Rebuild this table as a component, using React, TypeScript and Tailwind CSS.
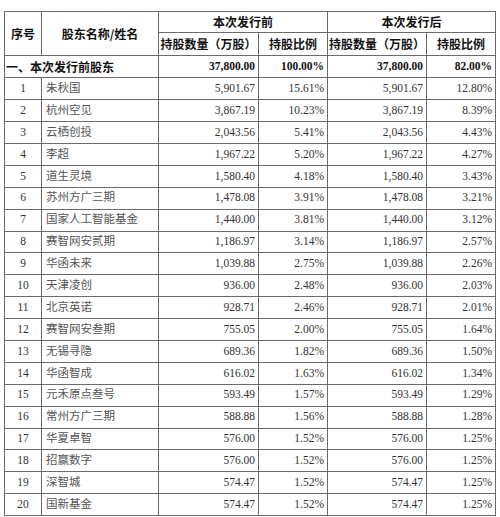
const rows = [
  ['1', '朱秋国', '5,901.67', '15.61%', '5,901.67', '12.80%'],
  ['2', '杭州空见', '3,867.19', '10.23%', '3,867.19', '8.39%'],
  ['3', '云栖创投', '2,043.56', '5.41%', '2,043.56', '4.43%'],
  ['4', '李超', '1,967.22', '5.20%', '1,967.22', '4.27%'],
  ['5', '道生灵境', '1,580.40', '4.18%', '1,580.40', '3.43%'],
  ['6', '苏州方广三期', '1,478.08', '3.91%', '1,478.08', '3.21%'],
  ['7', '国家人工智能基金', '1,440.00', '3.81%', '1,440.00', '3.12%'],
  ['8', '赛智网安贰期', '1,186.97', '3.14%', '1,186.97', '2.57%'],
  ['9', '华函未来', '1,039.88', '2.75%', '1,039.88', '2.26%'],
  ['10', '天津凌创', '936.00', '2.48%', '936.00', '2.03%'],
  ['11', '北京英诺', '928.71', '2.46%', '928.71', '2.01%'],
  ['12', '赛智网安叁期', '755.05', '2.00%', '755.05', '1.64%'],
  ['13', '无锡寻隐', '689.36', '1.82%', '689.36', '1.50%'],
  ['14', '华函智成', '616.02', '1.63%', '616.02', '1.34%'],
  ['15', '元禾原点叁号', '593.49', '1.57%', '593.49', '1.29%'],
  ['16', '常州方广三期', '588.88', '1.56%', '588.88', '1.28%'],
  ['17', '华夏卓智', '576.00', '1.52%', '576.00', '1.25%'],
  ['18', '招赢数字', '576.00', '1.52%', '576.00', '1.25%'],
  ['19', '深智城', '574.47', '1.52%', '574.47', '1.25%'],
  ['20', '国新基金', '574.47', '1.52%', '574.47', '1.25%'],
]

const cell = 'border border-[#6b6b6b] p-0'
const head = 'border border-[#6b6b6b] p-0 text-center font-bold text-[#111] font-["Noto_Sans_CJK_SC",sans-serif] text-[12px]'

export default function App() {
  return (
    <div className="w-[500px] h-[517px] overflow-hidden bg-white pt-[11px] pl-[4px]">
      <table className='table-fixed border-collapse w-[491px] text-[11.5px] leading-none text-[#333] font-["Liberation_Serif","Noto_Sans_CJK_SC",serif]'>
        <colgroup>
          <col className="w-[37px]" />
          <col className="w-[117px]" />
          <col className="w-[100px]" />
          <col className="w-[69px]" />
          <col className="w-[99px]" />
          <col className="w-[69px]" />
        </colgroup>
        <thead>
          <tr className="h-[21px]">
            <th rowSpan={2} className={head}>序号</th>
            <th rowSpan={2} className={head}>股东名称/姓名</th>
            <th colSpan={2} className={head}>本次发行前</th>
            <th colSpan={2} className={head}>本次发行后</th>
          </tr>
          <tr className="h-[23px]">
            <th className={head}>持股数量（万股）</th>
            <th className={head}>持股比例</th>
            <th className={head}>持股数量（万股）</th>
            <th className={head}>持股比例</th>
          </tr>
        </thead>
        <tbody>
          <tr className="h-[22.3px] font-bold text-[#111]">
            <td colSpan={2} className={`${cell} pl-[1px] text-left font-["Noto_Sans_CJK_SC",sans-serif] text-[12px]`}>
              一、本次发行前股东
            </td>
            <td className={`${cell} pr-[3px] text-right`}>37,800.00</td>
            <td className={`${cell} pr-[3px] text-right`}>100.00%</td>
            <td className={`${cell} pr-[3px] text-right`}>37,800.00</td>
            <td className={`${cell} pr-[3px] text-right`}>82.00%</td>
          </tr>
          {rows.map((r) => (
            <tr key={r[0]} className="h-[21.9px]">
              <td className={`${cell} text-center`}>{r[0]}</td>
              <td className={`${cell} pl-[4px] text-left text-[#555]`}>{r[1]}</td>
              <td className={`${cell} pr-[3px] text-right`}>{r[2]}</td>
              <td className={`${cell} pr-[3px] text-right`}>{r[3]}</td>
              <td className={`${cell} pr-[3px] text-right`}>{r[4]}</td>
              <td className={`${cell} pr-[3px] text-right`}>{r[5]}</td>
            </tr>
          ))}
        </tbody>
      </table>
    </div>
  )
}
